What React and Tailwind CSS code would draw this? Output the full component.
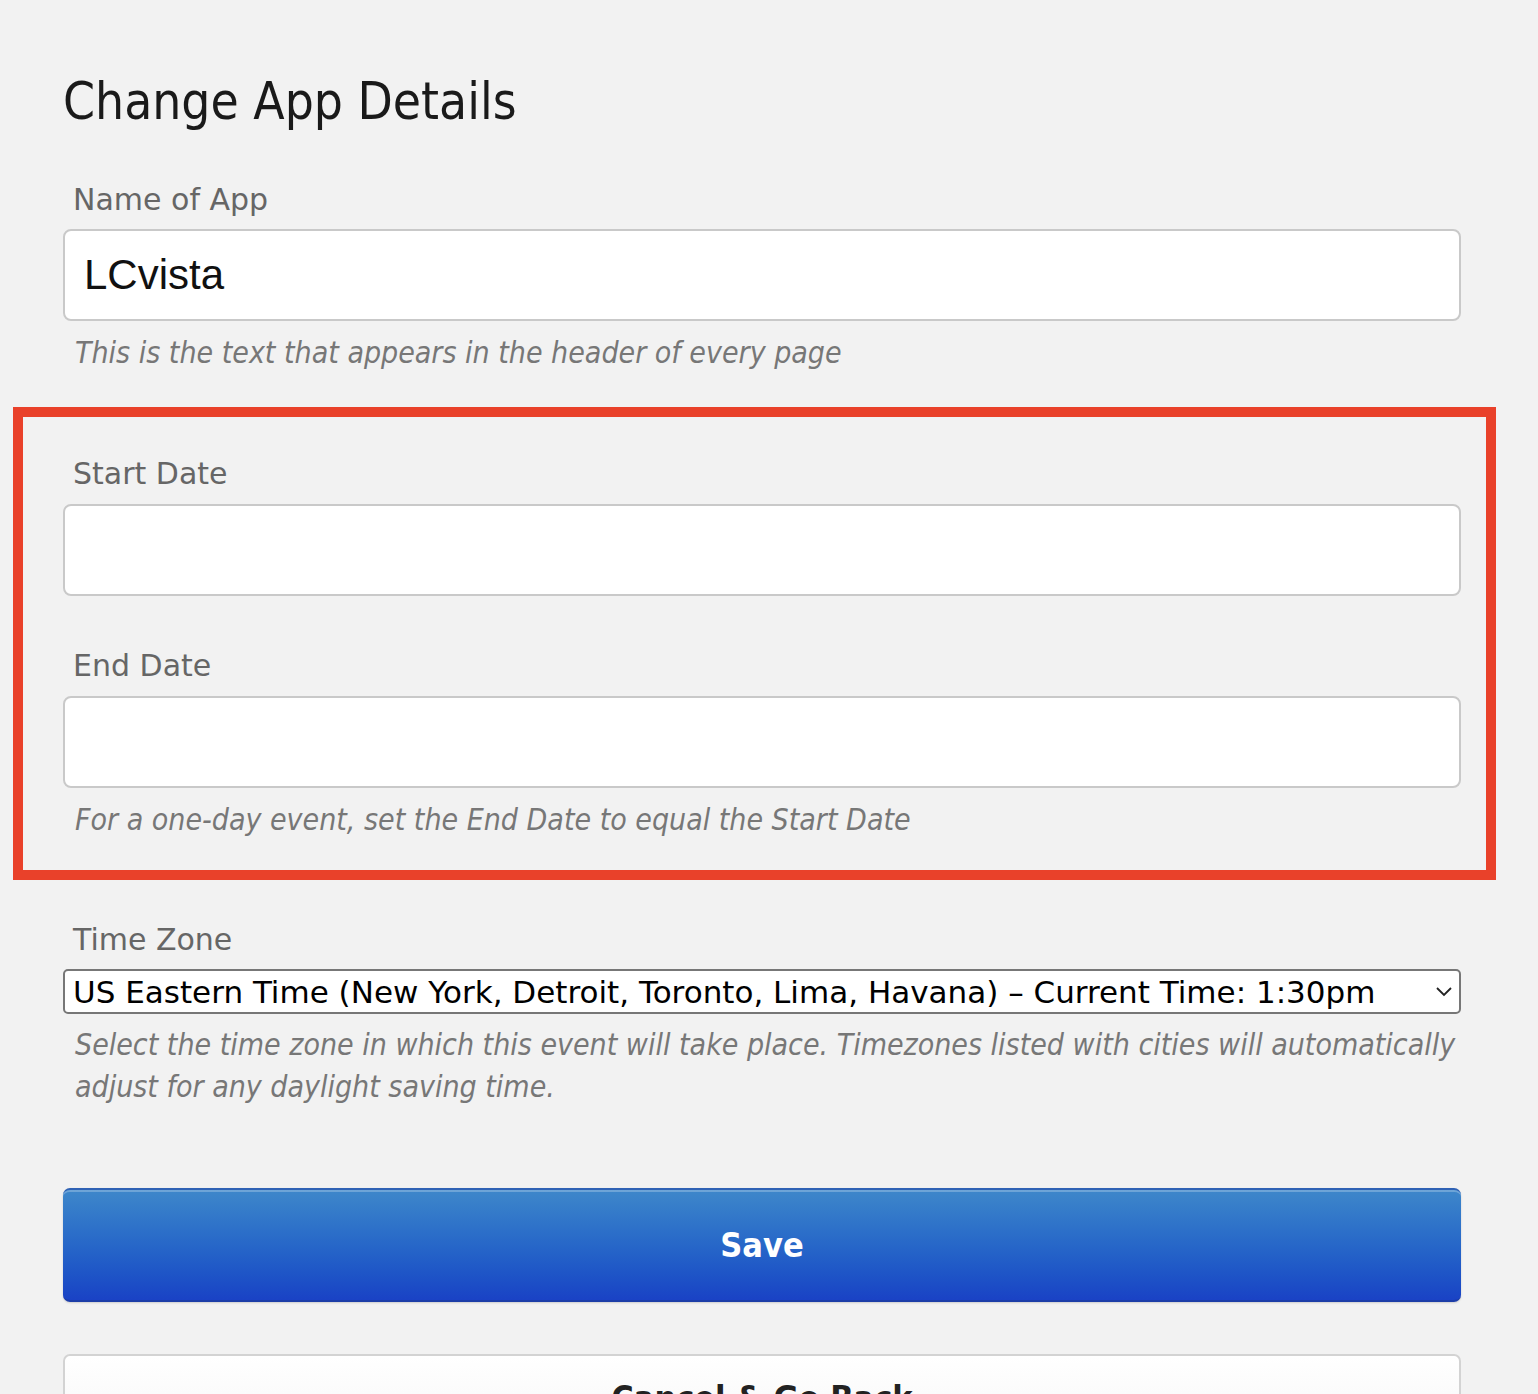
const lucida = "font-['DejaVu_Sans',sans-serif]";

function Label({ children, className = "" }) {
  return (
    <div className={`pl-[10px] text-[30px] leading-[40px] text-[#666] ${className}`}>
      {children}
    </div>
  );
}

function Hint({ children, className = "" }) {
  return (
    <p className={`pl-[12px] text-[30px] italic leading-[42px] text-[#777] font-stretch-condensed ${className}`}>
      {children}
    </p>
  );
}

function TextBox({ value = "", className = "" }) {
  return (
    <input
      type="text"
      defaultValue={value}
      className={`block h-[92px] w-full rounded-[8px] border-2 border-[#c9c9c9] bg-white pl-[19px] font-['Liberation_Sans',Arial,sans-serif] text-[42px] text-[#111] outline-none ${className}`}
    />
  );
}

export default function App() {
  return (
    <div className={`h-screen overflow-hidden bg-[#f2f2f2] pl-[63px] pr-[77px] pt-[72px] ${lucida}`}>
      <h1 className="text-[51px] font-normal leading-[60px] text-[#1a1a1a] font-stretch-condensed">Change App Details</h1>

      <Label className="mt-[48px]">Name of App</Label>
      <TextBox value="LCvista" className="mt-[9px]" />
      <Hint className="mt-[11px]">This is the text that appears in the header of every page</Hint>

      {/* highlighted date range block */}
      <div className="-ml-[50px] -mr-[35px] mt-[33px] border-[10px] border-[#e9412a] pb-[29px] pl-[40px] pr-[25px] pt-[37px]">
        <Label>Start Date</Label>
        <TextBox className="mt-[10px]" />
        <Label className="mt-[50px]">End Date</Label>
        <TextBox className="mt-[10px]" />
        <Hint className="mt-[11px]">For a one-day event, set the End Date to equal the Start Date</Hint>
      </div>

      <Label className="mt-[40px]">Time Zone</Label>
      <div className="relative mt-[9px]">
        <select className="block h-[45px] w-full appearance-none rounded-[5px] border-2 border-[#777] bg-white pl-[8px] font-['DejaVu_Sans',sans-serif] text-[31px] leading-[40px] text-black outline-none">
          <option>US Eastern Time (New York, Detroit, Toronto, Lima, Havana) – Current Time: 1:30pm</option>
        </select>
        <svg
          className="pointer-events-none absolute right-[8px] top-[15px] h-[14px] w-[18px]"
          viewBox="0 0 18 14"
          fill="none"
          stroke="#222"
          strokeWidth="1.8"
        >
          <path d="M2 4 L9 11 L16 4" />
        </svg>
      </div>
      <Hint className="mt-[10px] pr-[4px]">
        Select the time zone in which this event will take place. Timezones listed with cities will automatically adjust for any daylight saving time.
      </Hint>

      <button className="mt-[80px] flex h-[114px] w-full items-center justify-center rounded-[7px] border-t-2 border-b-2 border-t-[#2f62b5] border-b-[#1c3da8] bg-gradient-to-b from-[#3e87ca] to-[#1a42c5] text-[34px] font-bold text-white font-stretch-condensed shadow-[inset_0_2px_0_rgba(255,255,255,0.25),0_1px_2px_rgba(0,0,0,0.15)]">
        Save
      </button>

      <button className="mt-[52px] flex h-[88px] w-full items-center justify-center rounded-[7px] border-2 border-[#d3d3d3] bg-gradient-to-b from-white to-[#f6f6f6] text-[34px] font-bold text-[#222] font-stretch-condensed">
        Cancel &amp; Go Back
      </button>
    </div>
  );
}
